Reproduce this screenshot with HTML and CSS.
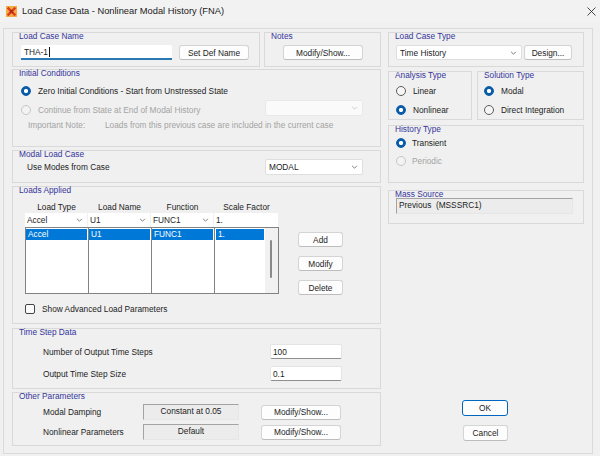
FILE: index.html
```html
<!DOCTYPE html>
<html>
<head>
<meta charset="utf-8">
<link rel="stylesheet" href="styles.css">
</head>
<body>
<div class="titlebar">
  <svg class="appicon" viewBox="0 0 11 11"><rect width="11" height="11" fill="#f3ad45"/><path d="M1.6 1.6l7.8 7.8M9.4 1.6l-7.8 7.8" stroke="#dc3d1c" stroke-width="2.3"/><rect x="4" y="4" width="3" height="3" fill="#b8281a"/></svg>
  <span class="ttl">Load Case Data - Nonlinear Modal History (FNA)</span>
  <svg class="close" viewBox="0 0 9 9"><path d="M0.5 0.5l8 8M8.5 0.5l-8 8" stroke="#333" stroke-width="0.9"/></svg>
</div>
<div class="panel">
  <div class="col-left">
    <div class="row1">
      <div class="group g-name">
        <div class="gtitle">Load Case Name</div>
        <div class="line l-name">
          <div class="input in-name">THA-1<span class="caret"></span></div>
          <div class="btn b-setdef">Set Def Name</div>
        </div>
      </div>
      <div class="group g-notes">
        <div class="gtitle">Notes</div>
        <div class="line l-notes"><div class="btn b-notes">Modify/Show...</div></div>
      </div>
    </div>

    <div class="group g-init">
      <div class="gtitle">Initial Conditions</div>
      <div class="line r-i1"><span class="radio on"></span><span class="rlabel">Zero Initial Conditions - Start from Unstressed State</span></div>
      <div class="line r-i2"><span class="radio dis"></span><span class="rlabel dtext">Continue from State at End of Modal History</span>
        <div class="combo cb-dis cb-init"><svg class="chev" viewBox="0 0 8 5"><path d="M1 1l3 3 3-3" fill="none" stroke="#c2c2c2"/></svg></div>
      </div>
      <div class="line r-i3 dtext"><span class="note-k">Important Note:</span><span>Loads from this previous case are included in the current case</span></div>
    </div>

    <div class="group g-modal">
      <div class="gtitle">Modal Load Case</div>
      <div class="line r-modal"><span>Use Modes from Case</span>
        <div class="combo cb-modal">MODAL<svg class="chev" viewBox="0 0 8 5"><path d="M1 1l3 3 3-3" fill="none" stroke="#606060"/></svg></div>
      </div>
    </div>

    <div class="group g-loads">
      <div class="gtitle">Loads Applied</div>
      <div class="loads-main">
        <div class="lgrid">
          <div class="lhead"><span>Load Type</span><span>Load Name</span><span>Function</span><span>Scale Factor</span></div>
          <div class="lcombo">
            <div>Accel<svg class="chev" viewBox="0 0 8 5"><path d="M1 1l3 3 3-3" fill="none" stroke="#606060"/></svg></div>
            <div>U1<svg class="chev" viewBox="0 0 8 5"><path d="M1 1l3 3 3-3" fill="none" stroke="#606060"/></svg></div>
            <div>FUNC1<svg class="chev" viewBox="0 0 8 5"><path d="M1 1l3 3 3-3" fill="none" stroke="#606060"/></svg></div>
            <div>1.</div>
          </div>
          <div class="llist">
            <div class="lcol"><div class="sel">Accel</div></div>
            <div class="lcol"><div class="sel">U1</div></div>
            <div class="lcol"><div class="sel">FUNC1</div></div>
            <div class="lcol c4">
              <div class="c4cell"><div class="sel">1.</div></div>
              <div class="sbar"><div class="thumb"></div></div>
            </div>
          </div>
        </div>
        <div class="lbtns">
          <div class="btn b-l">Add</div>
          <div class="btn b-l">Modify</div>
          <div class="btn b-l">Delete</div>
        </div>
      </div>
      <div class="line r-chk"><span class="chk"></span><span class="clabel">Show Advanced Load Parameters</span></div>
    </div>

    <div class="group g-time">
      <div class="gtitle">Time Step Data</div>
      <div class="line r-t1"><span class="tlabel">Number of Output Time Steps</span><div class="input in-t">100</div></div>
      <div class="line r-t2"><span class="tlabel">Output Time Step Size</span><div class="input in-t">0.1</div></div>
    </div>

    <div class="group g-other">
      <div class="gtitle">Other Parameters</div>
      <div class="line r-o1"><span class="olabel">Modal Damping</span><div class="sunk s-other">Constant at 0.05</div><div class="btn b-other">Modify/Show...</div></div>
      <div class="line r-o2"><span class="olabel">Nonlinear Parameters</span><div class="sunk s-other">Default</div><div class="btn b-other">Modify/Show...</div></div>
    </div>
  </div>

  <div class="col-right">
    <div class="group g-type">
      <div class="gtitle">Load Case Type</div>
      <div class="line l-type">
        <div class="combo cb-type">Time History<svg class="chev" viewBox="0 0 8 5"><path d="M1 1l3 3 3-3" fill="none" stroke="#606060"/></svg></div>
        <div class="btn b-design">Design...</div>
      </div>
    </div>

    <div class="row-at">
      <div class="group g-anal">
        <div class="gtitle">Analysis Type</div>
        <div class="line r-a1 pl7"><span class="radio"></span><span class="rlabel">Linear</span></div>
        <div class="line r-a2 pl7"><span class="radio on"></span><span class="rlabel">Nonlinear</span></div>
      </div>
      <div class="group g-sol">
        <div class="gtitle">Solution Type</div>
        <div class="line r-a1 pl6"><span class="radio on"></span><span class="rlabel">Modal</span></div>
        <div class="line r-a2 pl6"><span class="radio"></span><span class="rlabel">Direct Integration</span></div>
      </div>
    </div>

    <div class="group g-hist">
      <div class="gtitle">History Type</div>
      <div class="line r-h1 pl7"><span class="radio on"></span><span class="rlabel">Transient</span></div>
      <div class="line r-h2 pl7"><span class="radio dis"></span><span class="rlabel dtext">Periodic</span></div>
    </div>

    <div class="group g-mass">
      <div class="gtitle">Mass Source</div>
      <div class="sunk s-mass">Previous&nbsp; (MSSSRC1)</div>
    </div>

    <div class="okarea">
      <div class="btn b-ok">OK</div>
      <div class="btn b-cancel">Cancel</div>
    </div>
  </div>
</div>
</body>
</html>
```

FILE: styles.css
```css
* { box-sizing: border-box; }
html, body { margin: 0; }
body {
  width: 600px;
  height: 456px;
  overflow: hidden;
  background: #f0f0f0;
  font-family: "Liberation Sans", Arial, sans-serif;
  font-size: 8.3px;
  line-height: 10px;
  color: #1c1c1c;
}

.titlebar {
  height: 22px;
  display: flex;
  align-items: center;
  padding-left: 6px;
  background: #f2f2f2;
}
.appicon { width: 11px; height: 11px; margin-right: 5px; flex: none; }
.ttl { font-size: 9.3px; color: #1b1b1b; }
.close { width: 9px; height: 9px; margin-left: auto; margin-right: 4px; }

.panel {
  margin: 6px 0 0 3px;
  width: 590px;
  height: 426px;
  border: 1px solid #dadada;
  padding: 3px 0 0 8px;
  display: flex;
  gap: 7px;
}
.col-left { width: 369px; display: flex; flex-direction: column; }
.col-right { width: 196px; display: flex; flex-direction: column; }

.group { border: 1px solid #d9d9d9; flex: none; }
.gtitle {
  color: #35359b;
  margin: -2px 0 0 6px;
  height: 10px;
  line-height: 10px;
  white-space: nowrap;
}

.line { display: flex; align-items: center; white-space: nowrap; }

.btn {
  display: flex;
  align-items: center;
  justify-content: center;
  background: #fdfdfd;
  border: 1px solid #d4d4d4;
  border-bottom-color: #bdbdbd;
  border-radius: 3px;
  flex: none;
  color: #1c1c1c;
}

.input {
  background: #fff;
  border: 1px solid #e4e4e4;
  border-bottom-color: #8e8e8e;
  border-radius: 2px;
  display: flex;
  align-items: center;
  padding-left: 2px;
  flex: none;
}

.combo {
  display: flex;
  align-items: center;
  background: #fff;
  border: 1px solid #dedede;
  border-radius: 2px;
  padding: 0 4px 0 3px;
  flex: none;
}
.chev { width: 7px; height: 4px; margin-left: auto; flex: none; }

.sunk {
  background: #ececec;
  border: 1px solid;
  border-color: #a3a3a3 #e6e6e6 #e6e6e6 #a3a3a3;
  flex: none;
}

.radio {
  width: 10px;
  height: 10px;
  border-radius: 50%;
  border: 1px solid #5c5c5c;
  background: #f6f6f6;
  flex: none;
}
.radio.on {
  border-color: #0a5cab;
  background: radial-gradient(circle, #ffffff 0 1.8px, #0a5cab 2.4px);
}
.radio.dis { border-color: #c6c6c6; background: #f3f3f3; }
.rlabel { margin-left: 7px; }
.dtext { color: #a3a3a3; }

/* row 1 */
.row1 { display: flex; gap: 4px; height: 35px; flex: none; }
.g-name { width: 248px; }
.g-notes { width: 117px; }
.l-name { margin-top: 4px; padding-left: 8px; }
.in-name {
  width: 151px;
  height: 15px;
  border: none;
  border-bottom: 2px solid #2b79b3;
  border-radius: 2px 2px 0 0;
  padding-left: 3px;
}
.caret { width: 1px; height: 10px; background: #111; margin-left: 1px; }
.b-setdef { width: 70px; height: 15px; margin-left: 7px; }
.l-notes { margin-top: 4px; padding-left: 18px; }
.b-notes { width: 80px; height: 15px; }

/* initial conditions */
.g-init { margin-top: 2px; height: 78px; }
.r-i1 { margin-top: 6px; padding-left: 8px; height: 14px; }
.r-i2 { margin-top: 5px; padding-left: 8px; height: 14px; }
.cb-init {
  width: 98px;
  height: 16px;
  margin-left: auto;
  margin-right: 17px;
  align-self: flex-start;
  margin-top: -3px;
  background: #fafafa;
  border-color: #e8e8e8;
}
.r-i3 { margin-top: 2px; padding-left: 15px; height: 12px; }
.note-k { width: 77px; flex: none; }

/* modal */
.g-modal { margin-top: 3px; height: 33px; }
.r-modal { padding-left: 14px; height: 16px; }
.cb-modal { width: 98px; height: 16px; margin-left: auto; margin-right: 17px; }

/* loads applied */
.g-loads { margin-top: 3px; height: 138px; }
.loads-main { display: flex; margin-top: 5px; padding-left: 12px; }
.lgrid { width: 254px; flex: none; }
.lhead {
  display: grid;
  grid-template-columns: 63px 63px 63px 65px;
  height: 13px;
  align-items: center;
  text-align: center;
  white-space: nowrap;
}
.lcombo {
  display: grid;
  grid-template-columns: 63px 63px 63px 65px;
  height: 14px;
}
.lcombo > div {
  background: #fff;
  margin-right: 1px;
  display: flex;
  align-items: center;
  padding: 0 4px 0 2px;
}
.llist {
  height: 67px;
  border: 1px solid #828282;
  display: grid;
  grid-template-columns: 62px 63px 63px 64px;
  background: #fff;
}
.lcol + .lcol { border-left: 1px solid #828282; }
.sel {
  background: #0078d7;
  color: #fff;
  height: 11px;
  line-height: 11px;
  margin: 1px 1px 0 0;
  padding-left: 2px;
}
.c4 { display: flex; }
.c4cell { width: 50px; flex: none; }
.c4cell .sel { margin-left: 1px; }
.sbar { width: 13px; flex: none; background: #f1f1f1; }
.thumb {
  width: 2px;
  height: 38px;
  margin: 12px 0 0 5px;
  background: #8a8a8a;
  border-radius: 1px;
}
.lbtns {
  margin-left: 19px;
  padding-top: 32px;
  display: flex;
  flex-direction: column;
  gap: 9px;
}
.b-l { width: 45px; height: 15px; }
.r-chk { margin-top: 8px; padding-left: 12px; height: 12px; }
.chk {
  width: 10px;
  height: 10px;
  border: 1px solid #444;
  border-radius: 2px;
  background: #fbfbfb;
  flex: none;
}
.clabel { margin-left: 7px; }

/* time step */
.g-time { margin-top: 4px; height: 61px; }
.r-t1, .r-t2 { margin-top: 7px; padding-left: 30px; height: 15px; }
.tlabel { flex: 1; }
.in-t { width: 72px; height: 15px; margin-right: 38px; }

/* other */
.g-other { margin-top: 3px; height: 54px; }
.r-o1 { margin-top: 3px; padding-left: 30px; height: 16px; }
.r-o2 { margin-top: 4px; padding-left: 30px; height: 16px; }
.olabel { width: 100px; flex: none; }
.s-other {
  width: 96px;
  height: 16px;
  text-align: center;
  padding-top: 1px;
  line-height: 10px;
}
.b-other { width: 80px; height: 15px; margin-left: 22px; }

/* right column */
.g-type { height: 35px; }
.l-type { margin-top: 4px; padding-left: 7px; }
.cb-type { width: 126px; height: 15px; }
.b-design { width: 48px; height: 15px; margin-left: 2px; }

.row-at { display: flex; gap: 5px; margin-top: 4px; height: 49px; flex: none; }
.g-anal { width: 84px; }
.g-sol { width: 107px; }
.pl7 { padding-left: 7px; }
.pl6 { padding-left: 6px; }
.r-a1 { margin-top: 5px; height: 12px; }
.r-a2 { margin-top: 7px; height: 12px; }

.g-hist { margin-top: 5px; height: 58px; }
.r-h1 { margin-top: 3px; height: 12px; }
.r-h2 { margin-top: 6px; height: 12px; }
.r-h1 .rlabel, .r-h2 .rlabel { margin-left: 6px; }

.g-mass { margin-top: 7px; height: 34px; }
.s-mass {
  margin: -1px 0 0 7px;
  width: 177px;
  height: 16px;
  padding: 1px 0 0 2px;
  white-space: nowrap;
}

.okarea {
  margin-top: 176px;
  padding-left: 74px;
  display: flex;
  flex-direction: column;
  gap: 9px;
}
.b-ok { width: 46px; height: 16px; border: 1px solid #0067c0; }
.b-cancel { width: 45px; height: 16px; margin-left: 1px; }
```
